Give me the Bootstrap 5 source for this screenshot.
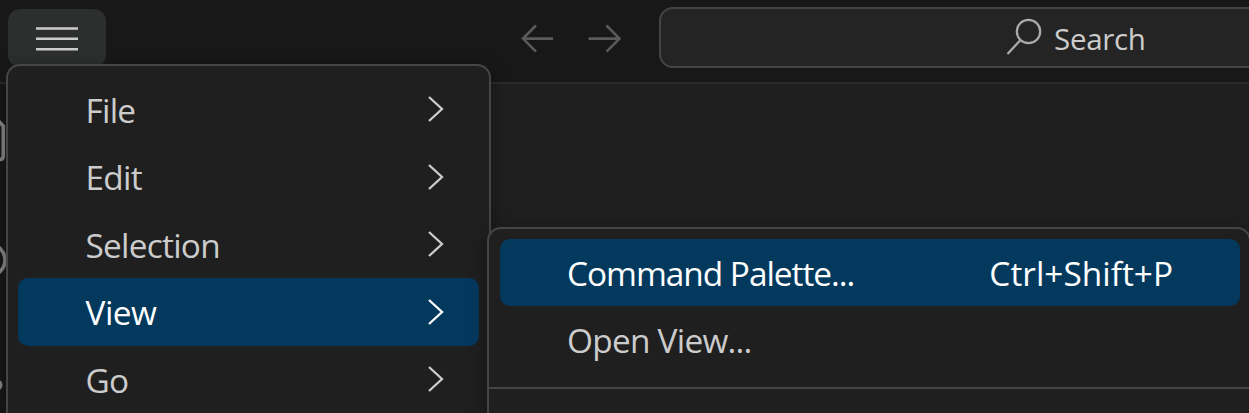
<!DOCTYPE html>
<html lang="en" data-bs-theme="dark">
<head>
<meta charset="utf-8">
<meta name="viewport" content="width=device-width, initial-scale=1">
<title>Code editor menu</title>
<link href="https://cdn.jsdelivr.net/npm/bootstrap@5.3.0/dist/css/bootstrap.min.css" rel="stylesheet">
<style>
  body { background: #1f1f1f; color: #ccc; font-family: "Open Sans", "Noto Sans", sans-serif; font-size: 33.4px; line-height: 1; height: 413px; }
  svg { display: block; fill: none; stroke: currentColor; flex: none; }
  .titlebar { height: 84px; background: #181818; border-bottom: 2px solid #2b2b2b; }
  .burger { width: 98px; height: 58px; margin: 9px 0 0 8px; padding-top: 2px; border-radius: 12px; background: #2d2e2e; color: #ccc; }
  .history { margin: 21px 0 0 414px; gap: 33px; color: #5a5a5a; }
  .finder { width: 960px; height: 61px; margin: 7px 0 0 38px; padding-left: 345px; background: #242424; border: 2px solid #444; border-radius: 14px; font-size: 29.5px; letter-spacing: -.3px; }
  .finder svg { margin-top: -2px; }
  .finder span { margin-left: 12px; padding-top: 2px; }
  .activity { width: 96px; height: 329px; background: #181818; color: #868686; }
  .popup { background: #1f1f1f; border: 2px solid #454545; border-bottom: 0; border-radius: 14px 14px 0 0; box-shadow: 0 4px 18px rgba(0,0,0,.36); }
  .main-menu { left: 6px; top: 64px; width: 485px; height: 349px; padding: 9.5px 10px 0; }
  .sub-menu { left: 487px; top: 227px; width: 764px; height: 186px; padding: 10px 0 0; z-index: 2; }
  .entry { height: 67.5px; border-radius: 10px; padding: 0 34px 0 67.5px; letter-spacing: -.75px; }
  .entry span { padding-top: 2px; white-space: nowrap; }
  .sub-menu .entry { margin: 0 9px 0 11px; padding: 0 67px; height: 67px; }
  .entry.chosen { background: #04395e; color: #fff; }
  .main-menu .chosen { letter-spacing: -.5px; }
  .sub-menu .chosen { letter-spacing: -1.03px; }
  .sub-menu .chosen .keys { letter-spacing: 0; }
  .rule { height: 2px; background: #454545; margin-top: 14px; }
</style>
</head>
<body class="overflow-hidden position-relative">
<header class="titlebar d-flex align-items-start overflow-hidden">
  <div class="burger d-flex align-items-center justify-content-center flex-shrink-0">
    <svg width="42" height="24" viewBox="0 0 42 24" stroke-width="2.6"><path d="M0 1.5H42M0 11.8H42M0 22.2H42"/></svg>
  </div>
  <div class="history d-flex">
    <svg width="34" height="36" viewBox="0 0 34 36" stroke-width="2.6"><path d="M16 4.5L3 17.6L16 30.7M2.5 17.6H33"/></svg>
    <svg width="34" height="36" viewBox="0 0 34 36" stroke-width="2.6"><path d="M19.5 4.5L32.5 17.6L19.5 30.7M1.5 17.6H33"/></svg>
  </div>
  <div class="finder d-flex align-items-center flex-shrink-0">
    <svg width="36" height="38" viewBox="0 0 36 38" stroke-width="2.3" color="#aaa"><circle cx="22.5" cy="13.5" r="11.7"/><path d="M14.5 22L1.5 36"/></svg>
    <span>Search</span>
  </div>
</header>
<div class="activity">
  <svg width="96" height="329" viewBox="0 0 96 329" stroke-width="3.6">
    <path d="M-6 37.5H-1L3.3 42V72Q3.3 75.5 0 75.5H-6"/>
    <circle cx="-11" cy="176" r="16"/>
    <circle cx="-3" cy="301" r="5.5" fill="currentColor" stroke="none"/>
  </svg>
</div>

<nav class="popup main-menu position-absolute">
  <div class="entry d-flex align-items-center justify-content-between"><span>File</span><svg width="18" height="28" viewBox="0 0 18 28" stroke-width="2.3"><path d="M2 2L15 14L2 26"/></svg></div>
  <div class="entry d-flex align-items-center justify-content-between"><span>Edit</span><svg width="18" height="28" viewBox="0 0 18 28" stroke-width="2.3"><path d="M2 2L15 14L2 26"/></svg></div>
  <div class="entry d-flex align-items-center justify-content-between"><span>Selection</span><svg width="18" height="28" viewBox="0 0 18 28" stroke-width="2.3"><path d="M2 2L15 14L2 26"/></svg></div>
  <div class="entry chosen d-flex align-items-center justify-content-between"><span>View</span><svg width="18" height="28" viewBox="0 0 18 28" stroke-width="2.3"><path d="M2 2L15 14L2 26"/></svg></div>
  <div class="entry d-flex align-items-center justify-content-between"><span>Go</span><svg width="18" height="28" viewBox="0 0 18 28" stroke-width="2.3"><path d="M2 2L15 14L2 26"/></svg></div>
</nav>

<nav class="popup sub-menu position-absolute">
  <div class="entry chosen d-flex align-items-center justify-content-between"><span>Command Palette...</span><span class="keys">Ctrl+Shift+P</span></div>
  <div class="entry d-flex align-items-center"><span>Open View...</span></div>
  <div class="rule"></div>
</nav>
<script src="https://cdn.jsdelivr.net/npm/bootstrap@5.3.0/dist/js/bootstrap.bundle.min.js"></script>
</body>
</html>
